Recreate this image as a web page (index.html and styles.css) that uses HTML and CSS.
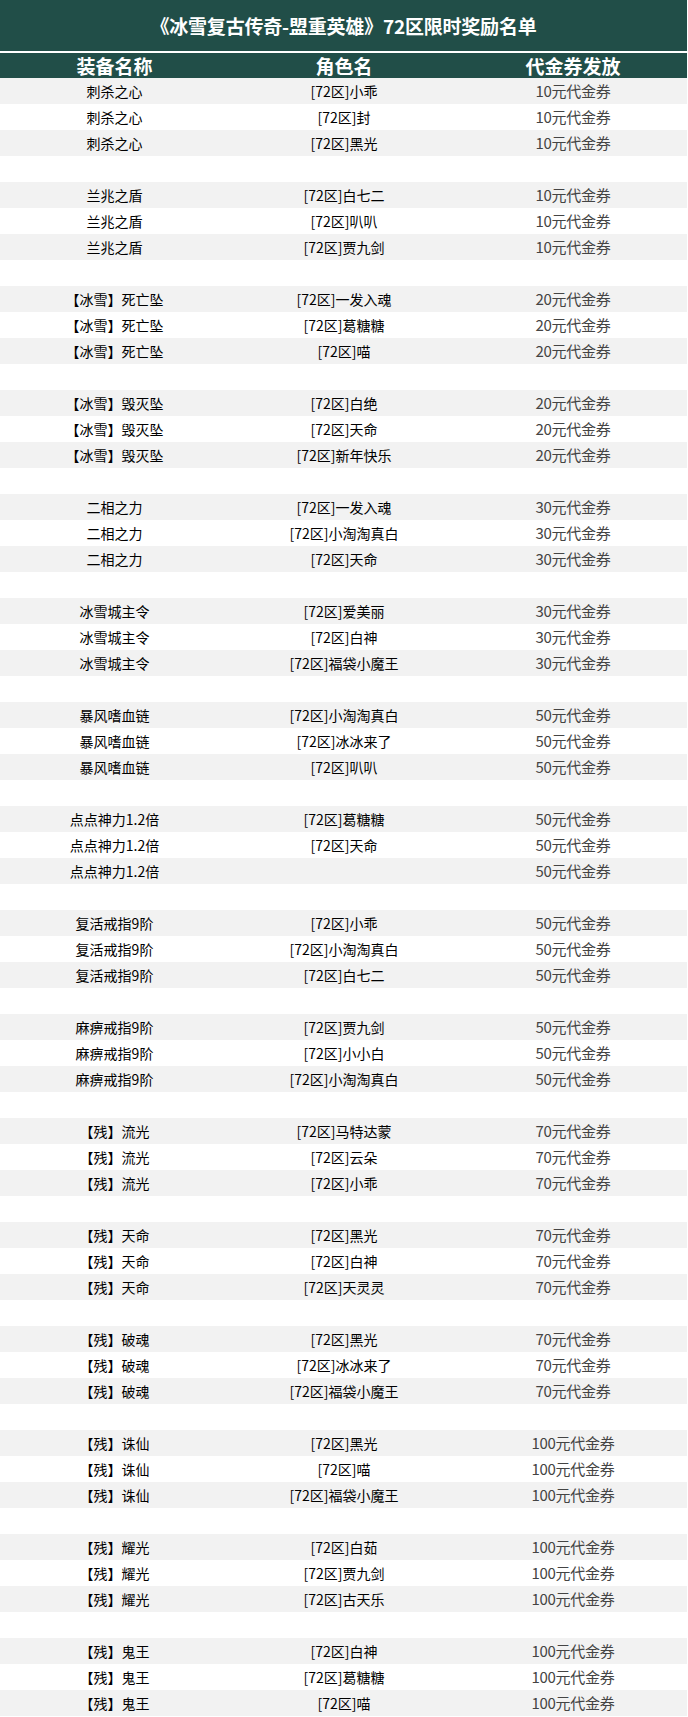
FILE: index.html
```html
<!DOCTYPE html>
<html lang="zh-CN">
<head>
<meta charset="utf-8">
<title>72区限时奖励名单</title>
<link rel="stylesheet" href="styles.css">
</head>
<body>
<div class="sheet">
  <div class="title">《冰雪复古传奇-盟重英雄》72区限时奖励名单</div>
  <div class="row head"><span>装备名称</span><span>角色名</span><span>代金券发放</span></div>

  <div class="row g"><span>刺杀之心</span><span>[72区]小乖</span><span class="v">10元代金券</span></div>
  <div class="row"><span>刺杀之心</span><span>[72区]封</span><span class="v">10元代金券</span></div>
  <div class="row g"><span>刺杀之心</span><span>[72区]黑光</span><span class="v">10元代金券</span></div>
  <div class="row blank"></div>

  <div class="row g"><span>兰兆之盾</span><span>[72区]白七二</span><span class="v">10元代金券</span></div>
  <div class="row"><span>兰兆之盾</span><span>[72区]叭叭</span><span class="v">10元代金券</span></div>
  <div class="row g"><span>兰兆之盾</span><span>[72区]贾九剑</span><span class="v">10元代金券</span></div>
  <div class="row blank"></div>

  <div class="row g"><span>【冰雪】死亡坠</span><span>[72区]一发入魂</span><span class="v">20元代金券</span></div>
  <div class="row"><span>【冰雪】死亡坠</span><span>[72区]葛糖糖</span><span class="v">20元代金券</span></div>
  <div class="row g"><span>【冰雪】死亡坠</span><span>[72区]喵</span><span class="v">20元代金券</span></div>
  <div class="row blank"></div>

  <div class="row g"><span>【冰雪】毁灭坠</span><span>[72区]白绝</span><span class="v">20元代金券</span></div>
  <div class="row"><span>【冰雪】毁灭坠</span><span>[72区]天命</span><span class="v">20元代金券</span></div>
  <div class="row g"><span>【冰雪】毁灭坠</span><span>[72区]新年快乐</span><span class="v">20元代金券</span></div>
  <div class="row blank"></div>

  <div class="row g"><span>二相之力</span><span>[72区]一发入魂</span><span class="v">30元代金券</span></div>
  <div class="row"><span>二相之力</span><span>[72区]小淘淘真白</span><span class="v">30元代金券</span></div>
  <div class="row g"><span>二相之力</span><span>[72区]天命</span><span class="v">30元代金券</span></div>
  <div class="row blank"></div>

  <div class="row g"><span>冰雪城主令</span><span>[72区]爱美丽</span><span class="v">30元代金券</span></div>
  <div class="row"><span>冰雪城主令</span><span>[72区]白神</span><span class="v">30元代金券</span></div>
  <div class="row g"><span>冰雪城主令</span><span>[72区]福袋小魔王</span><span class="v">30元代金券</span></div>
  <div class="row blank"></div>

  <div class="row g"><span>暴风嗜血链</span><span>[72区]小淘淘真白</span><span class="v">50元代金券</span></div>
  <div class="row"><span>暴风嗜血链</span><span>[72区]冰冰来了</span><span class="v">50元代金券</span></div>
  <div class="row g"><span>暴风嗜血链</span><span>[72区]叭叭</span><span class="v">50元代金券</span></div>
  <div class="row blank"></div>

  <div class="row g"><span>点点神力1.2倍</span><span>[72区]葛糖糖</span><span class="v">50元代金券</span></div>
  <div class="row"><span>点点神力1.2倍</span><span>[72区]天命</span><span class="v">50元代金券</span></div>
  <div class="row g"><span>点点神力1.2倍</span><span></span><span class="v">50元代金券</span></div>
  <div class="row blank"></div>

  <div class="row g"><span>复活戒指9阶</span><span>[72区]小乖</span><span class="v">50元代金券</span></div>
  <div class="row"><span>复活戒指9阶</span><span>[72区]小淘淘真白</span><span class="v">50元代金券</span></div>
  <div class="row g"><span>复活戒指9阶</span><span>[72区]白七二</span><span class="v">50元代金券</span></div>
  <div class="row blank"></div>

  <div class="row g"><span>麻痹戒指9阶</span><span>[72区]贾九剑</span><span class="v">50元代金券</span></div>
  <div class="row"><span>麻痹戒指9阶</span><span>[72区]小小白</span><span class="v">50元代金券</span></div>
  <div class="row g"><span>麻痹戒指9阶</span><span>[72区]小淘淘真白</span><span class="v">50元代金券</span></div>
  <div class="row blank"></div>

  <div class="row g"><span>【残】流光</span><span>[72区]马特达蒙</span><span class="v">70元代金券</span></div>
  <div class="row"><span>【残】流光</span><span>[72区]云朵</span><span class="v">70元代金券</span></div>
  <div class="row g"><span>【残】流光</span><span>[72区]小乖</span><span class="v">70元代金券</span></div>
  <div class="row blank"></div>

  <div class="row g"><span>【残】天命</span><span>[72区]黑光</span><span class="v">70元代金券</span></div>
  <div class="row"><span>【残】天命</span><span>[72区]白神</span><span class="v">70元代金券</span></div>
  <div class="row g"><span>【残】天命</span><span>[72区]天灵灵</span><span class="v">70元代金券</span></div>
  <div class="row blank"></div>

  <div class="row g"><span>【残】破魂</span><span>[72区]黑光</span><span class="v">70元代金券</span></div>
  <div class="row"><span>【残】破魂</span><span>[72区]冰冰来了</span><span class="v">70元代金券</span></div>
  <div class="row g"><span>【残】破魂</span><span>[72区]福袋小魔王</span><span class="v">70元代金券</span></div>
  <div class="row blank"></div>

  <div class="row g"><span>【残】诛仙</span><span>[72区]黑光</span><span class="v">100元代金券</span></div>
  <div class="row"><span>【残】诛仙</span><span>[72区]喵</span><span class="v">100元代金券</span></div>
  <div class="row g"><span>【残】诛仙</span><span>[72区]福袋小魔王</span><span class="v">100元代金券</span></div>
  <div class="row blank"></div>

  <div class="row g"><span>【残】耀光</span><span>[72区]白茹</span><span class="v">100元代金券</span></div>
  <div class="row"><span>【残】耀光</span><span>[72区]贾九剑</span><span class="v">100元代金券</span></div>
  <div class="row g"><span>【残】耀光</span><span>[72区]古天乐</span><span class="v">100元代金券</span></div>
  <div class="row blank"></div>

  <div class="row g"><span>【残】鬼王</span><span>[72区]白神</span><span class="v">100元代金券</span></div>
  <div class="row"><span>【残】鬼王</span><span>[72区]葛糖糖</span><span class="v">100元代金券</span></div>
  <div class="row g"><span>【残】鬼王</span><span>[72区]喵</span><span class="v">100元代金券</span></div>
</div>
</body>
</html>
```
FILE: styles.css
```css
html, body {
  margin: 0;
  padding: 0;
  background: #ffffff;
}
body {
  font-family: "Noto Sans CJK SC", "Noto Sans", sans-serif;
  color: #000;
}
.sheet {
  width: 687px;
  display: flex;
  flex-direction: column;
}
.title {
  height: 51px;
  margin-bottom: 2px;
  background: #214e48;
  color: #ffffff;
  font-weight: 700;
  font-size: 19px;
  display: flex;
  align-items: center;
  justify-content: center;
  letter-spacing: -0.2px;
}
.row {
  display: grid;
  grid-template-columns: 229px 230px 228px;
  height: 26px;
  align-items: center;
  background: #ffffff;
}
.row > span {
  text-align: center;
  font-size: 14px;
  line-height: 26px;
  white-space: nowrap;
}
.row.g {
  background: #f2f2f2;
}
.row.head {
  height: 25px;
  background: #214e48;
}
.row.head > span {
  color: #ffffff;
  font-weight: 700;
  font-size: 19px;
  line-height: 25px;
}
.row > span.v {
  color: #444444;
  font-size: 15px;
  letter-spacing: -0.3px;
}
```
